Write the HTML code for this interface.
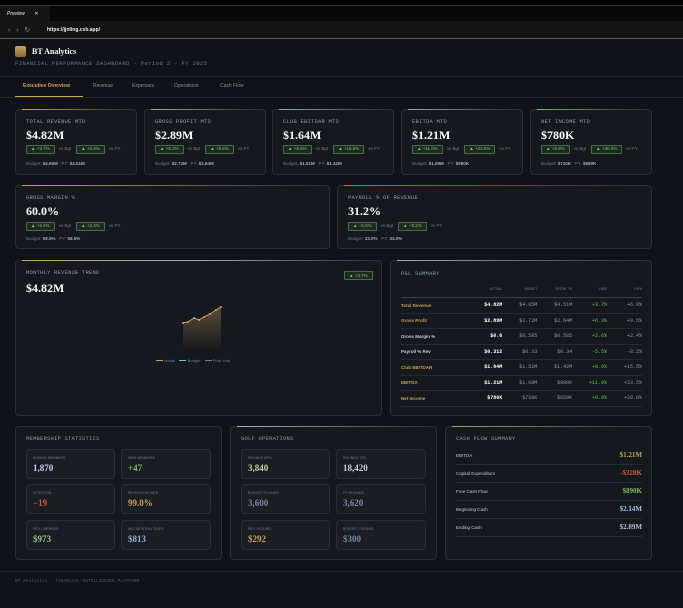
<!DOCTYPE html>
<html><head><meta charset="utf-8"><style>
*{box-sizing:border-box;margin:0;padding:0}
body{width:683px;height:608px;background:#0f1216;font-family:"Liberation Sans",sans-serif;color:#ddd;position:relative;overflow:hidden}
.abs{position:absolute}
.mono{font-family:"Liberation Mono",monospace}
.serif{font-family:"Liberation Serif",serif;font-weight:bold}
.card{position:absolute;background:#15181c;border:1px solid #2a2e34;border-radius:4px}
.lbl{font-family:"Liberation Mono",monospace;font-size:5.5px;color:#8a9bb0;letter-spacing:.2px;line-height:6px}
.big{font-family:"Liberation Serif",serif;font-weight:bold;color:#fff;line-height:1}
.row{display:flex;align-items:center;height:9px;line-height:1}
.pill{display:inline-flex;align-items:center;border:1px solid #4a6a48;background:#1e2a1e;color:#7fc47a;font-size:4.5px;padding:0 4px;border-radius:1px;height:9px}
.vs{font-size:4.5px;color:#6f7884;margin:0 5px 0 4px}
.sub{font-size:4.5px;color:#6f7884;line-height:5px}
.sub b{color:#aab}
.bar{position:absolute;left:6px;right:6px;top:-1px;height:1px}
table{border-collapse:collapse;width:100%}
td{font-size:5px;height:15.5px;border-bottom:1px solid #262a30}
</style></head><body>
<div class="abs" style="left:0;top:0;width:683px;height:5px;background:#000"></div>
<div class="abs" style="left:0;top:5px;width:683px;height:16px;background:#070707;border-top:1px solid #333"></div>
<div class="abs" style="left:0;top:6px;width:50px;height:15px;background:#141414;font-size:5px;color:#eee;font-style:italic;padding:5px 7px">Preview <span style="margin-left:8px;font-style:normal">✕</span></div>
<div class="abs" style="left:0;top:21px;width:683px;height:18px;background:#141414;border-bottom:1px solid #555"></div>
<div class="abs" style="left:8px;top:26px;font-size:7px;color:#888">‹&nbsp;&nbsp;&nbsp;›&nbsp;&nbsp;&nbsp;↻</div>
<div class="abs" style="left:47px;top:27px;font-size:5px;color:#eee;font-weight:bold">https://jjnling.csb.app/</div>
<div class="abs" style="left:15px;top:46px;width:11px;height:11px;background:linear-gradient(#c9a25a,#8a6a30);border-radius:2px"></div>
<div class="abs serif" style="left:32px;top:47px;font-size:8px;color:#fff">BT Analytics</div>
<div class="abs mono" style="left:15px;top:60px;font-size:5.5px;color:#6a7888;letter-spacing:.4px">FINANCIAL PERFORMANCE DASHBOARD · Period 2 - FY 2025</div>
<div class="abs" style="left:0;top:76px;width:683px;border-top:1px solid #22262b"></div>
<div class="abs" style="left:0;top:97px;width:683px;border-top:1px solid #22262b"></div>
<div class="abs" style="left:15px;top:96px;width:68px;height:1px;background:#c9a25a"></div>
<div class="abs" style="left:23px;top:83px;font-size:5px;color:#c9a25a;font-weight:bold">Executive Overview</div>
<div class="abs" style="left:93px;top:83px;font-size:5px;color:#8090a8">Revenue</div>
<div class="abs" style="left:132px;top:83px;font-size:5px;color:#8090a8">Expenses</div>
<div class="abs" style="left:174px;top:83px;font-size:5px;color:#8090a8">Operations</div>
<div class="abs" style="left:220px;top:83px;font-size:5px;color:#8090a8">Cash Flow</div>

<div class="card" style="left:15px;top:109px;width:122px;height:66px"><div class="bar" style="background:linear-gradient(90deg,#c9a25a,transparent)"></div>
<div class="abs lbl" style="left:10px;top:9px">TOTAL REVENUE MTD</div><div class="abs big" style="left:10px;top:19px;font-size:12px">$4.82M</div>
<div class="abs row" style="left:10px;top:35px"><span class="pill">▲ +3.7%</span><span class="vs">vs Bgt</span><span class="pill">▲ +6.9%</span><span class="vs">vs PY</span></div>
<div class="abs sub" style="left:10px;top:51px">Budget: <b>$4.65M</b> &nbsp; PY: <b>$4.51M</b></div></div>
<div class="card" style="left:144px;top:109px;width:122px;height:66px"><div class="bar" style="background:linear-gradient(90deg,#9ab89a,transparent)"></div>
<div class="abs lbl" style="left:10px;top:9px">GROSS PROFIT MTD</div><div class="abs big" style="left:10px;top:19px;font-size:12px">$2.89M</div>
<div class="abs row" style="left:10px;top:35px"><span class="pill">▲ +6.2%</span><span class="vs">vs Bgt</span><span class="pill">▲ +9.5%</span><span class="vs">vs PY</span></div>
<div class="abs sub" style="left:10px;top:51px">Budget: <b>$2.72M</b> &nbsp; PY: <b>$2.64M</b></div></div>
<div class="card" style="left:272px;top:109px;width:122px;height:66px"><div class="bar" style="background:linear-gradient(90deg,#8ab0c8,transparent)"></div>
<div class="abs lbl" style="left:10px;top:9px">CLUB EBITDAR MTD</div><div class="abs big" style="left:10px;top:19px;font-size:12px">$1.64M</div>
<div class="abs row" style="left:10px;top:35px"><span class="pill">▲ +8.6%</span><span class="vs">vs Bgt</span><span class="pill">▲ +15.5%</span><span class="vs">vs PY</span></div>
<div class="abs sub" style="left:10px;top:51px">Budget: <b>$1.51M</b> &nbsp; PY: <b>$1.42M</b></div></div>
<div class="card" style="left:401px;top:109px;width:122px;height:66px"><div class="bar" style="background:linear-gradient(90deg,#b0a0c8,transparent)"></div>
<div class="abs lbl" style="left:10px;top:9px">EBITDA MTD</div><div class="abs big" style="left:10px;top:19px;font-size:12px">$1.21M</div>
<div class="abs row" style="left:10px;top:35px"><span class="pill">▲ +11.0%</span><span class="vs">vs Bgt</span><span class="pill">▲ +23.5%</span><span class="vs">vs PY</span></div>
<div class="abs sub" style="left:10px;top:51px">Budget: <b>$1.09M</b> &nbsp; PY: <b>$980K</b></div></div>
<div class="card" style="left:530px;top:109px;width:122px;height:66px"><div class="bar" style="background:linear-gradient(90deg,#7ab86a,transparent)"></div>
<div class="abs lbl" style="left:10px;top:9px">NET INCOME MTD</div><div class="abs big" style="left:10px;top:19px;font-size:12px">$780K</div>
<div class="abs row" style="left:10px;top:35px"><span class="pill">▲ +9.9%</span><span class="vs">vs Bgt</span><span class="pill">▲ +30.0%</span><span class="vs">vs PY</span></div>
<div class="abs sub" style="left:10px;top:51px">Budget: <b>$710K</b> &nbsp; PY: <b>$650K</b></div></div>

<div class="card" style="left:15px;top:185px;width:315px;height:64px"><div class="bar" style="background:linear-gradient(90deg,#c9a25a,transparent)"></div>
<div class="abs lbl" style="left:10px;top:9px">GROSS MARGIN %</div><div class="abs big" style="left:10px;top:19px;font-size:12px">60.0%</div>
<div class="abs row" style="left:10px;top:36px"><span class="pill">▲ +2.4%</span><span class="vs">vs Bgt</span><span class="pill">▲ +2.4%</span><span class="vs">vs PY</span></div>
<div class="abs sub" style="left:10px;top:50px">Budget: <b>58.5%</b> &nbsp; PY: <b>58.5%</b></div></div>
<div class="card" style="left:337px;top:185px;width:315px;height:64px"><div class="bar" style="background:linear-gradient(90deg,#d0603a,transparent)"></div>
<div class="abs lbl" style="left:10px;top:9px">PAYROLL % OF REVENUE</div><div class="abs big" style="left:10px;top:19px;font-size:12px">31.2%</div>
<div class="abs row" style="left:10px;top:36px"><span class="pill">▲ −5.5%</span><span class="vs">vs Bgt</span><span class="pill">▲ −8.2%</span><span class="vs">vs PY</span></div>
<div class="abs sub" style="left:10px;top:50px">Budget: <b>33.0%</b> &nbsp; PY: <b>34.0%</b></div></div>

<div class="card" style="left:15px;top:260px;width:367px;height:156px"><div class="bar" style="background:linear-gradient(90deg,#c9a25a,#8ab0c8,transparent)"></div>
<div class="abs lbl" style="left:10px;top:9px">MONTHLY REVENUE TREND</div><div class="abs big" style="left:10px;top:21px;font-size:12px">$4.82M</div>
<div class="abs pill" style="left:328px;top:10px">▲ +3.7%</div>
<svg class="abs" style="left:150px;top:45px" width="100" height="50"><defs><linearGradient id="g" x1="0" y1="0" x2="0" y2="1"><stop offset="0" stop-color="#5a4c38"/><stop offset="1" stop-color="#15181c"/></linearGradient></defs>
<path d="M17 17 L22 16 L28 12 L33 14 L38 11 L44 8 L50 4 L55 1 L55 45 L17 45Z" fill="url(#g)"/>
<polyline points="17,17 22,16 28,12 33,14 38,11 44,8 50,4 55,1" fill="none" stroke="#c9a25a" stroke-width="1"/>
<g fill="#c9a25a"><circle cx="17" cy="17" r="1"/><circle cx="22" cy="16" r="1"/><circle cx="28" cy="12" r="1"/><circle cx="33" cy="14" r="1"/><circle cx="38" cy="11" r="1"/><circle cx="44" cy="8" r="1"/><circle cx="50" cy="4" r="1"/><circle cx="55" cy="1" r="1"/></g></svg>
<div class="abs" style="left:140px;top:97px;font-size:4px;color:#7080a0"><span style="display:inline-block;width:7px;height:1px;background:#c9a25a;vertical-align:middle"></span> Actual &nbsp;&nbsp; <span style="display:inline-block;width:7px;height:1px;background:#8ab0c8;vertical-align:middle"></span> Budget &nbsp;&nbsp; <span style="display:inline-block;width:7px;height:1px;background:#778;vertical-align:middle"></span> Prior Year</div></div>

<div class="card" style="left:390px;top:260px;width:262px;height:156px"><div class="bar" style="background:linear-gradient(90deg,#8ab0c8,transparent)"></div>
<div class="abs lbl" style="left:10px;top:10px">P&amp;L SUMMARY</div>
<div class="abs" style="left:10px;top:21px;width:241px">
<table><tr style="font-family:'Liberation Mono',monospace;color:#6a7888"><td style="font-size:3.5px;height:14px;border-bottom:1px solid #3a3e44"></td><td style="font-size:3.5px;text-align:right;border-bottom:1px solid #3a3e44">ACTUAL</td><td style="font-size:3.5px;text-align:right;border-bottom:1px solid #3a3e44">BUDGET</td><td style="font-size:3.5px;text-align:right;border-bottom:1px solid #3a3e44">PRIOR YR</td><td style="font-size:3.5px;text-align:right;border-bottom:1px solid #3a3e44">VAR%</td><td style="font-size:3.5px;text-align:right;border-bottom:1px solid #3a3e44">YOY%</td></tr>
<tbody class="mono" style="text-align:right">
<tr><td style="text-align:left;color:#c9a25a;font-family:'Liberation Sans';font-weight:bold;font-size:4.5px">Total Revenue</td><td style="color:#fff;font-weight:bold">$4.82M</td><td style="color:#8a9bb0">$4.65M</td><td style="color:#8a9bb0">$4.51M</td><td style="color:#6ac060">+3.7%</td><td style="color:#8a9bb0">+6.9%</td></tr>
<tr><td style="text-align:left;color:#c9a25a;font-family:'Liberation Sans';font-weight:bold;font-size:4.5px">Gross Profit</td><td style="color:#fff;font-weight:bold">$2.89M</td><td style="color:#8a9bb0">$2.72M</td><td style="color:#8a9bb0">$2.64M</td><td style="color:#6ac060">+6.3%</td><td style="color:#8a9bb0">+9.5%</td></tr>
<tr><td style="text-align:left;color:#c8d0e0;font-family:'Liberation Sans';font-weight:bold;font-size:4.5px">Gross Margin %</td><td style="color:#fff;font-weight:bold">$0.6</td><td style="color:#8a9bb0">$0.585</td><td style="color:#8a9bb0">$0.585</td><td style="color:#6ac060">+2.6%</td><td style="color:#8a9bb0">+2.4%</td></tr>
<tr><td style="text-align:left;color:#c8d0e0;font-family:'Liberation Sans';font-weight:bold;font-size:4.5px">Payroll % Rev</td><td style="color:#fff;font-weight:bold">$0.312</td><td style="color:#8a9bb0">$0.33</td><td style="color:#8a9bb0">$0.34</td><td style="color:#6ac060">-5.5%</td><td style="color:#8a9bb0">-8.2%</td></tr>
<tr><td style="text-align:left;color:#c9a25a;font-family:'Liberation Sans';font-weight:bold;font-size:4.5px">Club EBITDAR</td><td style="color:#fff;font-weight:bold">$1.64M</td><td style="color:#8a9bb0">$1.51M</td><td style="color:#8a9bb0">$1.42M</td><td style="color:#6ac060">+8.6%</td><td style="color:#8a9bb0">+15.5%</td></tr>
<tr><td style="text-align:left;color:#c9a25a;font-family:'Liberation Sans';font-weight:bold;font-size:4.5px">EBITDA</td><td style="color:#fff;font-weight:bold">$1.21M</td><td style="color:#8a9bb0">$1.09M</td><td style="color:#8a9bb0">$980K</td><td style="color:#6ac060">+11.0%</td><td style="color:#8a9bb0">+23.5%</td></tr>
<tr><td style="text-align:left;color:#c9a25a;font-family:'Liberation Sans';font-weight:bold;font-size:4.5px">Net Income</td><td style="color:#fff;font-weight:bold">$780K</td><td style="color:#8a9bb0">$710K</td><td style="color:#8a9bb0">$650K</td><td style="color:#6ac060">+9.9%</td><td style="color:#8a9bb0">+20.0%</td></tr>
</tbody></table></div></div>

<div class="card" style="left:15px;top:426px;width:207px;height:134px">
<div class="abs lbl" style="left:10px;top:9px">MEMBERSHIP STATISTICS</div>
<div class="card" style="left:10px;top:22px;width:89px;height:30px;background:#1a1d21"><div class="abs sub" style="left:6px;top:6px;font-size:3.5px">ENDING MEMBERS</div><div class="abs big" style="left:6px;top:14px;font-size:9px;color:#c8d0f0">1,870</div></div>
<div class="card" style="left:105px;top:22px;width:90px;height:30px;background:#1a1d21"><div class="abs sub" style="left:6px;top:6px;font-size:3.5px">NEW MEMBERS</div><div class="abs big" style="left:6px;top:14px;font-size:9px;color:#7ab86a">+47</div></div>
<div class="card" style="left:10px;top:57px;width:89px;height:30px;background:#1a1d21"><div class="abs sub" style="left:6px;top:6px;font-size:3.5px">ATTRITION</div><div class="abs big" style="left:6px;top:14px;font-size:9px;color:#d05a40">−19</div></div>
<div class="card" style="left:105px;top:57px;width:90px;height:30px;background:#1a1d21"><div class="abs sub" style="left:6px;top:6px;font-size:3.5px">RETENTION RATE</div><div class="abs big" style="left:6px;top:14px;font-size:9px;color:#c9a25a">99.0%</div></div>
<div class="card" style="left:10px;top:93px;width:89px;height:30px;background:#1a1d21"><div class="abs sub" style="left:6px;top:6px;font-size:3.5px">REV / MEMBER</div><div class="abs big" style="left:6px;top:14px;font-size:9px;color:#9ac08a">$973</div></div>
<div class="card" style="left:105px;top:93px;width:90px;height:30px;background:#1a1d21"><div class="abs sub" style="left:6px;top:6px;font-size:3.5px">AVG MONTHLY DUES</div><div class="abs big" style="left:6px;top:14px;font-size:9px;color:#8ab0d8">$813</div></div>
</div>
<div class="card" style="left:230px;top:426px;width:207px;height:134px"><div class="bar" style="background:linear-gradient(90deg,#b0b8a0,transparent)"></div>
<div class="abs lbl" style="left:10px;top:9px">GOLF OPERATIONS</div>
<div class="card" style="left:10px;top:22px;width:89px;height:30px;background:#1a1d21"><div class="abs sub" style="left:6px;top:6px;font-size:3.5px">ROUNDS MTD</div><div class="abs big" style="left:6px;top:14px;font-size:9px;color:#c8d0a0">3,840</div></div>
<div class="card" style="left:105px;top:22px;width:90px;height:30px;background:#1a1d21"><div class="abs sub" style="left:6px;top:6px;font-size:3.5px">ROUNDS YTD</div><div class="abs big" style="left:6px;top:14px;font-size:9px;color:#c8d0e0">18,420</div></div>
<div class="card" style="left:10px;top:57px;width:89px;height:30px;background:#1a1d21"><div class="abs sub" style="left:6px;top:6px;font-size:3.5px">BUDGET ROUNDS</div><div class="abs big" style="left:6px;top:14px;font-size:9px;color:#7a8aa8">3,600</div></div>
<div class="card" style="left:105px;top:57px;width:90px;height:30px;background:#1a1d21"><div class="abs sub" style="left:6px;top:6px;font-size:3.5px">PY ROUNDS</div><div class="abs big" style="left:6px;top:14px;font-size:9px;color:#7a8aa8">3,620</div></div>
<div class="card" style="left:10px;top:93px;width:89px;height:30px;background:#1a1d21"><div class="abs sub" style="left:6px;top:6px;font-size:3.5px">REV / ROUND</div><div class="abs big" style="left:6px;top:14px;font-size:9px;color:#c9a25a">$292</div></div>
<div class="card" style="left:105px;top:93px;width:90px;height:30px;background:#1a1d21"><div class="abs sub" style="left:6px;top:6px;font-size:3.5px">BUDGET / ROUND</div><div class="abs big" style="left:6px;top:14px;font-size:9px;color:#7a8aa8">$300</div></div>
</div>
<div class="card" style="left:445px;top:426px;width:207px;height:134px"><div class="bar" style="background:linear-gradient(90deg,#7ab86a,transparent)"></div>
<div class="abs lbl" style="left:10px;top:9px">CASH FLOW SUMMARY</div>
<div class="abs" style="left:10px;top:20px;width:186px;font-size:4.5px;color:#c0c8d8">
<div style="height:18px;border-bottom:1px solid #262a30;display:flex;justify-content:space-between;align-items:center"><span>EBITDA</span><span class="big" style="font-size:7px;color:#c9a25a">$1.21M</span></div>
<div style="height:18px;border-bottom:1px solid #262a30;display:flex;justify-content:space-between;align-items:center"><span>Capital Expenditure</span><span class="big" style="font-size:7px;color:#d05a40">-$320K</span></div>
<div style="height:18px;border-bottom:1px solid #262a30;display:flex;justify-content:space-between;align-items:center"><span>Free Cash Flow</span><span class="big" style="font-size:7px;color:#7ab86a">$890K</span></div>
<div style="height:18px;border-bottom:1px solid #262a30;display:flex;justify-content:space-between;align-items:center"><span>Beginning Cash</span><span class="big" style="font-size:7px;color:#a8c0e0">$2.14M</span></div>
<div style="height:18px;border-bottom:1px solid #262a30;display:flex;justify-content:space-between;align-items:center"><span>Ending Cash</span><span class="big" style="font-size:7px;color:#a8c0e0">$2.89M</span></div>
</div></div>
<div class="abs" style="left:0;top:571px;width:683px;border-top:1px solid #22262b"></div>
<div class="abs mono" style="left:15px;top:579px;font-size:4.5px;color:#4a5868">BT Analytics · FINANCIAL INTELLIGENCE PLATFORM</div>
</body></html>
